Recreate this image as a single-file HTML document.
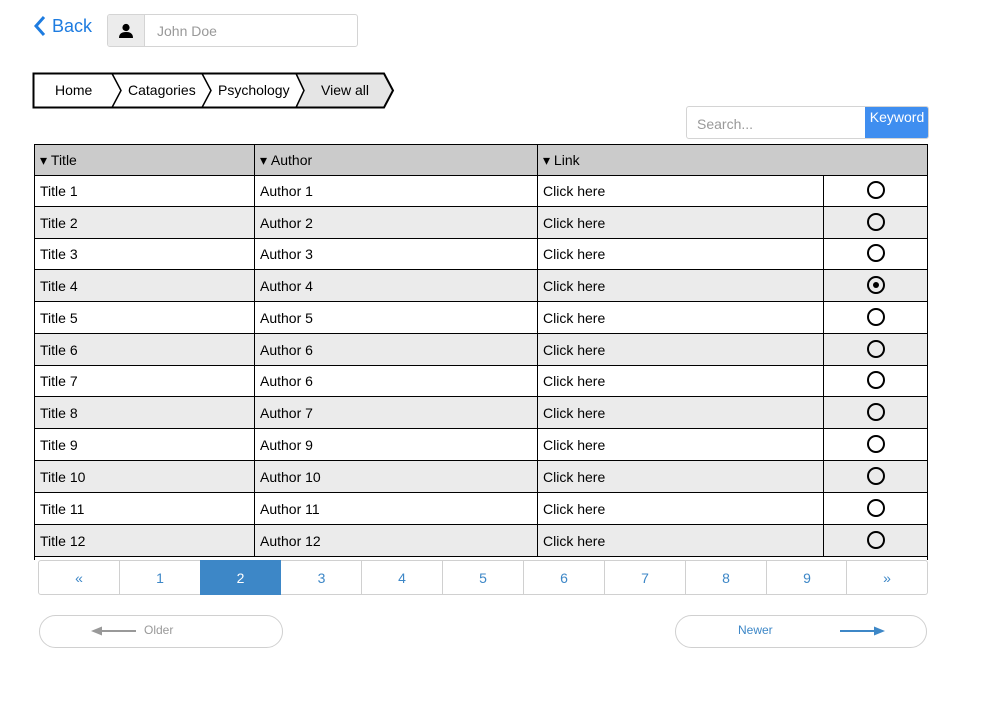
<!DOCTYPE html>
<html><head><meta charset="utf-8"><style>
*{box-sizing:border-box;margin:0;padding:0}
body{width:990px;height:702px;background:#fff;font-family:"Liberation Sans",Arial,sans-serif;position:relative;overflow:hidden;color:#000}
.a{position:absolute}
.row{position:absolute;left:34px;width:894px;border-left:1px solid #000;border-right:1px solid #000;border-bottom:1px solid #000;font-size:14px}
.c{position:absolute;top:0;bottom:0;display:flex;align-items:center;padding-left:5px}
.b{border-left:1px solid #000}
.r{position:absolute;left:832px;width:18px;height:18px;border:2px solid #000;border-radius:50%;top:50%;margin-top:-10px}
.pg{position:absolute;top:560px;height:35px;display:flex;align-items:center;justify-content:center;color:#3d87c7;font-size:14px;border-left:1px solid #d0d0d0}
</style></head><body>
<svg class="a" style="left:33px;top:15px" width="14" height="22" viewBox="0 0 14 22"><path d="M11 2 L3 11 L11 20" fill="none" stroke="#1e7ce0" stroke-width="3"/></svg>
<div class="a" style="left:52px;top:16px;font-size:18px;color:#1e7ce0">Back</div>
<div class="a" style="left:107px;top:14px;width:251px;height:33px;border:1px solid #d4d4d4;border-radius:3px;overflow:hidden">
<div class="a" style="left:0;top:0;width:37px;height:31px;background:#ececec;border-right:1px solid #d4d4d4"></div>
<svg class="a" style="left:10px;top:8px" width="16" height="16" viewBox="0 0 16 16"><circle cx="8" cy="4.5" r="3.6" fill="#000"/><path d="M1 15 Q1 9 8 9 Q15 9 15 15 Z" fill="#000"/></svg>
<div class="a" style="left:49px;top:8px;font-size:14px;color:#999">John Doe</div></div>
<svg class="a" style="left:32px;top:72px" width="364" height="37" viewBox="0 0 364 37">
<path d="M264 1.5 L352 1.5 L361 18.5 L352 35.5 L264 35.5 L272 18.5 Z" fill="#e5e5e5"/>
<path d="M1.5 1.5 L352 1.5 L361 18.5 L352 35.5 L1.5 35.5 Z" fill="none" stroke="#000" stroke-width="2"/>
<path d="M80 1.5 L89 18.5 L80 35.5 M170 1.5 L179 18.5 L170 35.5 M264 1.5 L272 18.5 L264 35.5" fill="none" stroke="#000" stroke-width="1.5"/>
<g font-family="Liberation Sans,Arial,sans-serif" font-size="14"><text x="23" y="23">Home</text><text x="96" y="23">Catagories</text><text x="186" y="23">Psychology</text><text x="289" y="23">View all</text></g></svg>
<div class="a" style="left:686px;top:106px;width:243px;height:33px;border:1px solid #d4d4d4;border-radius:3px;overflow:hidden">
<div class="a" style="left:10px;top:9px;font-size:14px;color:#999">Search...</div>
<div class="a" style="left:178px;top:0;width:64px;height:31px;background:#3f8ef0;color:#fff;font-size:14px;padding-top:2px;text-align:center">Keyword</div></div>

<div class="row" style="top:144px;height:32px;background:#cbcbcb;border-top:1px solid #000">
<div class="c" style="left:0">▾&nbsp;Title</div><div class="c b" style="left:219px">▾&nbsp;Author</div><div class="c b" style="left:502px">▾&nbsp;Link</div></div>

<div class="row" style="top:176px;height:31px"><div class="c" style="left:0">Title 1</div><div class="c b" style="left:219px">Author 1</div><div class="c b" style="left:502px;width:287px;border-right:1px solid #000">Click here</div><div class="r"></div></div>
<div class="row" style="top:207px;height:32px;background:#ebebeb"><div class="c" style="left:0">Title 2</div><div class="c b" style="left:219px">Author 2</div><div class="c b" style="left:502px;width:287px;border-right:1px solid #000">Click here</div><div class="r"></div></div>
<div class="row" style="top:239px;height:31px"><div class="c" style="left:0">Title 3</div><div class="c b" style="left:219px">Author 3</div><div class="c b" style="left:502px;width:287px;border-right:1px solid #000">Click here</div><div class="r"></div></div>
<div class="row" style="top:270px;height:32px;background:#ebebeb"><div class="c" style="left:0">Title 4</div><div class="c b" style="left:219px">Author 4</div><div class="c b" style="left:502px;width:287px;border-right:1px solid #000">Click here</div><div class="r"><div style="position:absolute;left:4px;top:4px;width:6px;height:6px;border-radius:50%;background:#000"></div></div></div>
<div class="row" style="top:302px;height:32px"><div class="c" style="left:0">Title 5</div><div class="c b" style="left:219px">Author 5</div><div class="c b" style="left:502px;width:287px;border-right:1px solid #000">Click here</div><div class="r"></div></div>
<div class="row" style="top:334px;height:32px;background:#ebebeb"><div class="c" style="left:0">Title 6</div><div class="c b" style="left:219px">Author 6</div><div class="c b" style="left:502px;width:287px;border-right:1px solid #000">Click here</div><div class="r"></div></div>
<div class="row" style="top:366px;height:31px"><div class="c" style="left:0">Title 7</div><div class="c b" style="left:219px">Author 6</div><div class="c b" style="left:502px;width:287px;border-right:1px solid #000">Click here</div><div class="r"></div></div>
<div class="row" style="top:397px;height:32px;background:#ebebeb"><div class="c" style="left:0">Title 8</div><div class="c b" style="left:219px">Author 7</div><div class="c b" style="left:502px;width:287px;border-right:1px solid #000">Click here</div><div class="r"></div></div>
<div class="row" style="top:429px;height:32px"><div class="c" style="left:0">Title 9</div><div class="c b" style="left:219px">Author 9</div><div class="c b" style="left:502px;width:287px;border-right:1px solid #000">Click here</div><div class="r"></div></div>
<div class="row" style="top:461px;height:32px;background:#ebebeb"><div class="c" style="left:0">Title 10</div><div class="c b" style="left:219px">Author 10</div><div class="c b" style="left:502px;width:287px;border-right:1px solid #000">Click here</div><div class="r"></div></div>
<div class="row" style="top:493px;height:32px"><div class="c" style="left:0">Title 11</div><div class="c b" style="left:219px">Author 11</div><div class="c b" style="left:502px;width:287px;border-right:1px solid #000">Click here</div><div class="r"></div></div>
<div class="row" style="top:525px;height:32px;background:#ebebeb"><div class="c" style="left:0">Title 12</div><div class="c b" style="left:219px">Author 12</div><div class="c b" style="left:502px;width:287px;border-right:1px solid #000">Click here</div><div class="r"></div></div>
<div class="a" style="left:34px;top:556px;width:1px;height:4px;background:#000"></div>
<div class="a" style="left:927px;top:556px;width:1px;height:4px;background:#000"></div>

<div class="a" style="left:38px;top:560px;width:890px;height:35px;border:1px solid #d0d0d0;border-radius:3px"></div>
<div class="pg" style="left:38px;width:82px;border-left:none">«</div>
<div class="pg" style="left:119px;width:81px">1</div>
<div class="pg" style="left:200px;width:81px;background:#3d87c7;color:#fff;border-left:none">2</div>
<div class="pg" style="left:281px;width:81px;border-left:none">3</div>
<div class="pg" style="left:361px;width:81px">4</div>
<div class="pg" style="left:442px;width:81px">5</div>
<div class="pg" style="left:523px;width:81px">6</div>
<div class="pg" style="left:604px;width:81px">7</div>
<div class="pg" style="left:685px;width:81px">8</div>
<div class="pg" style="left:766px;width:81px">9</div>
<div class="pg" style="left:846px;width:81px">»</div>

<div class="a" style="left:39px;top:615px;width:244px;height:33px;border:1px solid #d0d0d0;border-radius:17px"></div>
<svg class="a" style="left:90px;top:625px" width="48" height="12"><path d="M10 6 H46" stroke="#999" stroke-width="2"/><path d="M1 6 L12 1.5 L12 10.5 Z" fill="#999"/></svg>
<div class="a" style="left:144px;top:623px;font-size:12px;color:#999">Older</div>
<div class="a" style="left:675px;top:615px;width:252px;height:33px;border:1px solid #d0d0d0;border-radius:17px"></div>
<div class="a" style="left:738px;top:623px;font-size:12px;color:#3d87c7">Newer</div>
<svg class="a" style="left:838px;top:625px" width="48" height="12"><path d="M2 6 H38" stroke="#3d87c7" stroke-width="2"/><path d="M47 6 L36 1.5 L36 10.5 Z" fill="#3d87c7"/></svg>
</body></html>
